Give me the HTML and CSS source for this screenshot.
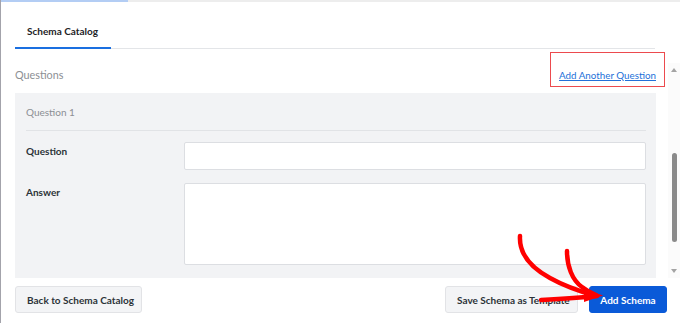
FILE: index.html
```html
<!DOCTYPE html>
<html>
<head>
<meta charset="utf-8">
<link rel="stylesheet" href="styles.css">
</head>
<body>
<div class="modal">
  <div class="topbar"><div class="topbar-active"></div><div class="topbar-rest"></div></div>
  <div class="tabs"><div class="tab">Schema Catalog</div></div>
  <div class="body">
    <div class="content">
      <div class="section-head">
        <span class="section-title">Questions</span>
        <a class="add-link" href="#">Add Another Question</a>
      </div>
      <div class="panel">
        <div class="panel-head">Question 1</div>
        <div class="row">
          <label class="label">Question</label>
          <div class="input"></div>
        </div>
        <div class="row">
          <label class="label">Answer</label>
          <div class="input textarea"></div>
        </div>
      </div>
    </div>
    <div class="scrollbar">
      <div class="sb-up"></div>
      <div class="sb-track"><div class="sb-thumb"></div></div>
      <div class="sb-down"></div>
    </div>
  </div>
  <div class="footer">
    <button class="btn btn-back">Back to Schema Catalog</button>
    <div class="footer-right">
      <button class="btn btn-save">Save Schema as Template</button>
      <button class="btn btn-primary">Add Schema</button>
    </div>
  </div>
  <div class="highlight"></div>
  <svg class="arrows" width="680" height="323" viewBox="0 0 680 323">
    <g fill="none" stroke="#ff0000" stroke-width="4.5" stroke-linecap="round" stroke-linejoin="round">
      <path d="M520,236 C519,252 528,266 550,278 C566,287 582,292 596,296"/>
      <path d="M567,251 C567,266 572,280 582,287 C587,291 591,293 596,295"/>
      <path d="M541,300 C560,299 578,298 597,296"/>
    </g>
    <path d="M584,289 L603,295.5 L584,302 Z" fill="#ff0000"/>
  </svg>
</div>
</body>
</html>
```
FILE: styles.css
```css
* { box-sizing: border-box; }
html, body { margin: 0; padding: 0; background: #fff; }
body { font-family: Lato, "Open Sans", sans-serif; color: #1e2327; }
.modal {
  position: relative;
  width: 680px;
  height: 323px;
  border-left: 1px solid #a3a3ab;
  overflow: hidden;
}
.topbar { display: flex; height: 2px; }
.topbar-active { width: 127px; background: #b3cdf4; }
.topbar-rest { flex: 1; background: #ededed; }
.tabs {
  margin: 0 25px 0 14px;
  border-bottom: 1px solid #e3e5e8;
  height: 47px;
  display: flex;
}
.tab {
  padding: 22px 12px 0 12px;
  width: 96px;
  height: 47px;
  font-size: 10px;
  font-weight: 700;
  line-height: 14px;
  color: #1d2327;
  border-bottom: 2px solid #1a6fe0;
  margin-bottom: -1px;
  white-space: nowrap;
}
.body { display: flex; height: 229px; }
.content { margin-left: 14px; width: 641px; overflow: hidden; }
.section-head {
  display: flex;
  justify-content: space-between;
  align-items: center;
  height: 44px;
  padding-top: 6px;
}
.section-title { font-size: 10.8px; color: #8c8f94; }
.add-link { font-size: 9.8px; color: #2271d9; text-decoration: underline; padding-top: 1px; white-space: nowrap; }
.panel {
  background: #f2f3f5;
  padding: 0 10px 14px 11px;
  height: 185px;
}
.panel-head {
  height: 38px;
  border-bottom: 1px solid #e1e3e6;
  font-size: 10px;
  color: #8c8f94;
  display: flex;
  align-items: center;
  padding-top: 1px;
}
.row { display: flex; padding-top: 11px; }
.row + .row { padding-top: 13px; }
.label {
  width: 158px;
  font-size: 10px;
  font-weight: 700;
  color: #2c3338;
  padding-top: 2px;
  line-height: 14px;
}
.input {
  flex: 1;
  height: 28px;
  background: #fff;
  border: 1px solid #dcdee2;
  border-radius: 2px;
}
.textarea { height: 82px; }
.scrollbar {
  margin-left: 12px;
  width: 12px;
  margin-top: 14px;
  height: 215px;
  background: #fbfbfb;
  display: flex;
  flex-direction: column;
  align-items: center;
}
.sb-up {
  margin-top: 5px;
  width: 0; height: 0;
  border-left: 3px solid transparent;
  border-right: 3px solid transparent;
  border-bottom: 4px solid #a3a3a3;
}
.sb-track { flex: 1; width: 100%; display: flex; justify-content: center; }
.sb-thumb {
  margin-top: 81px;
  width: 5px;
  height: 89px;
  background: #8a8a8a;
  border-radius: 3px;
}
.sb-down {
  margin-bottom: 5px;
  width: 0; height: 0;
  border-left: 3px solid transparent;
  border-right: 3px solid transparent;
  border-top: 4px solid #a3a3a3;
}
.footer {
  display: flex;
  justify-content: space-between;
  align-items: flex-start;
  padding: 8px 13px 0 14px;
}
.footer-right { display: flex; gap: 11px; }
.btn {
  font-family: Lato, "Open Sans", sans-serif;
  font-size: 10px;
  font-weight: 700;
  height: 27px;
  padding: 0 11px;
  background: #f3f4f6;
  color: #2c3338;
  border: 1px solid #e2e3e6;
  border-radius: 3px;
  white-space: nowrap;
}
.btn-back { width: 127px; }
.btn-save { width: 133px; text-align: left; padding-left: 11px; overflow: hidden; }
.btn-primary {
  background: #0a5ad8;
  border-color: #0a5ad8;
  color: #fff;
  width: 78px;
  padding: 0;
}
.highlight {
  position: absolute;
  left: 549px;
  top: 52px;
  width: 115px;
  height: 35px;
  border: 1.5px solid #ec4a4e;
}
.arrows { position: absolute; left: -1px; top: 0; pointer-events: none; }
```
